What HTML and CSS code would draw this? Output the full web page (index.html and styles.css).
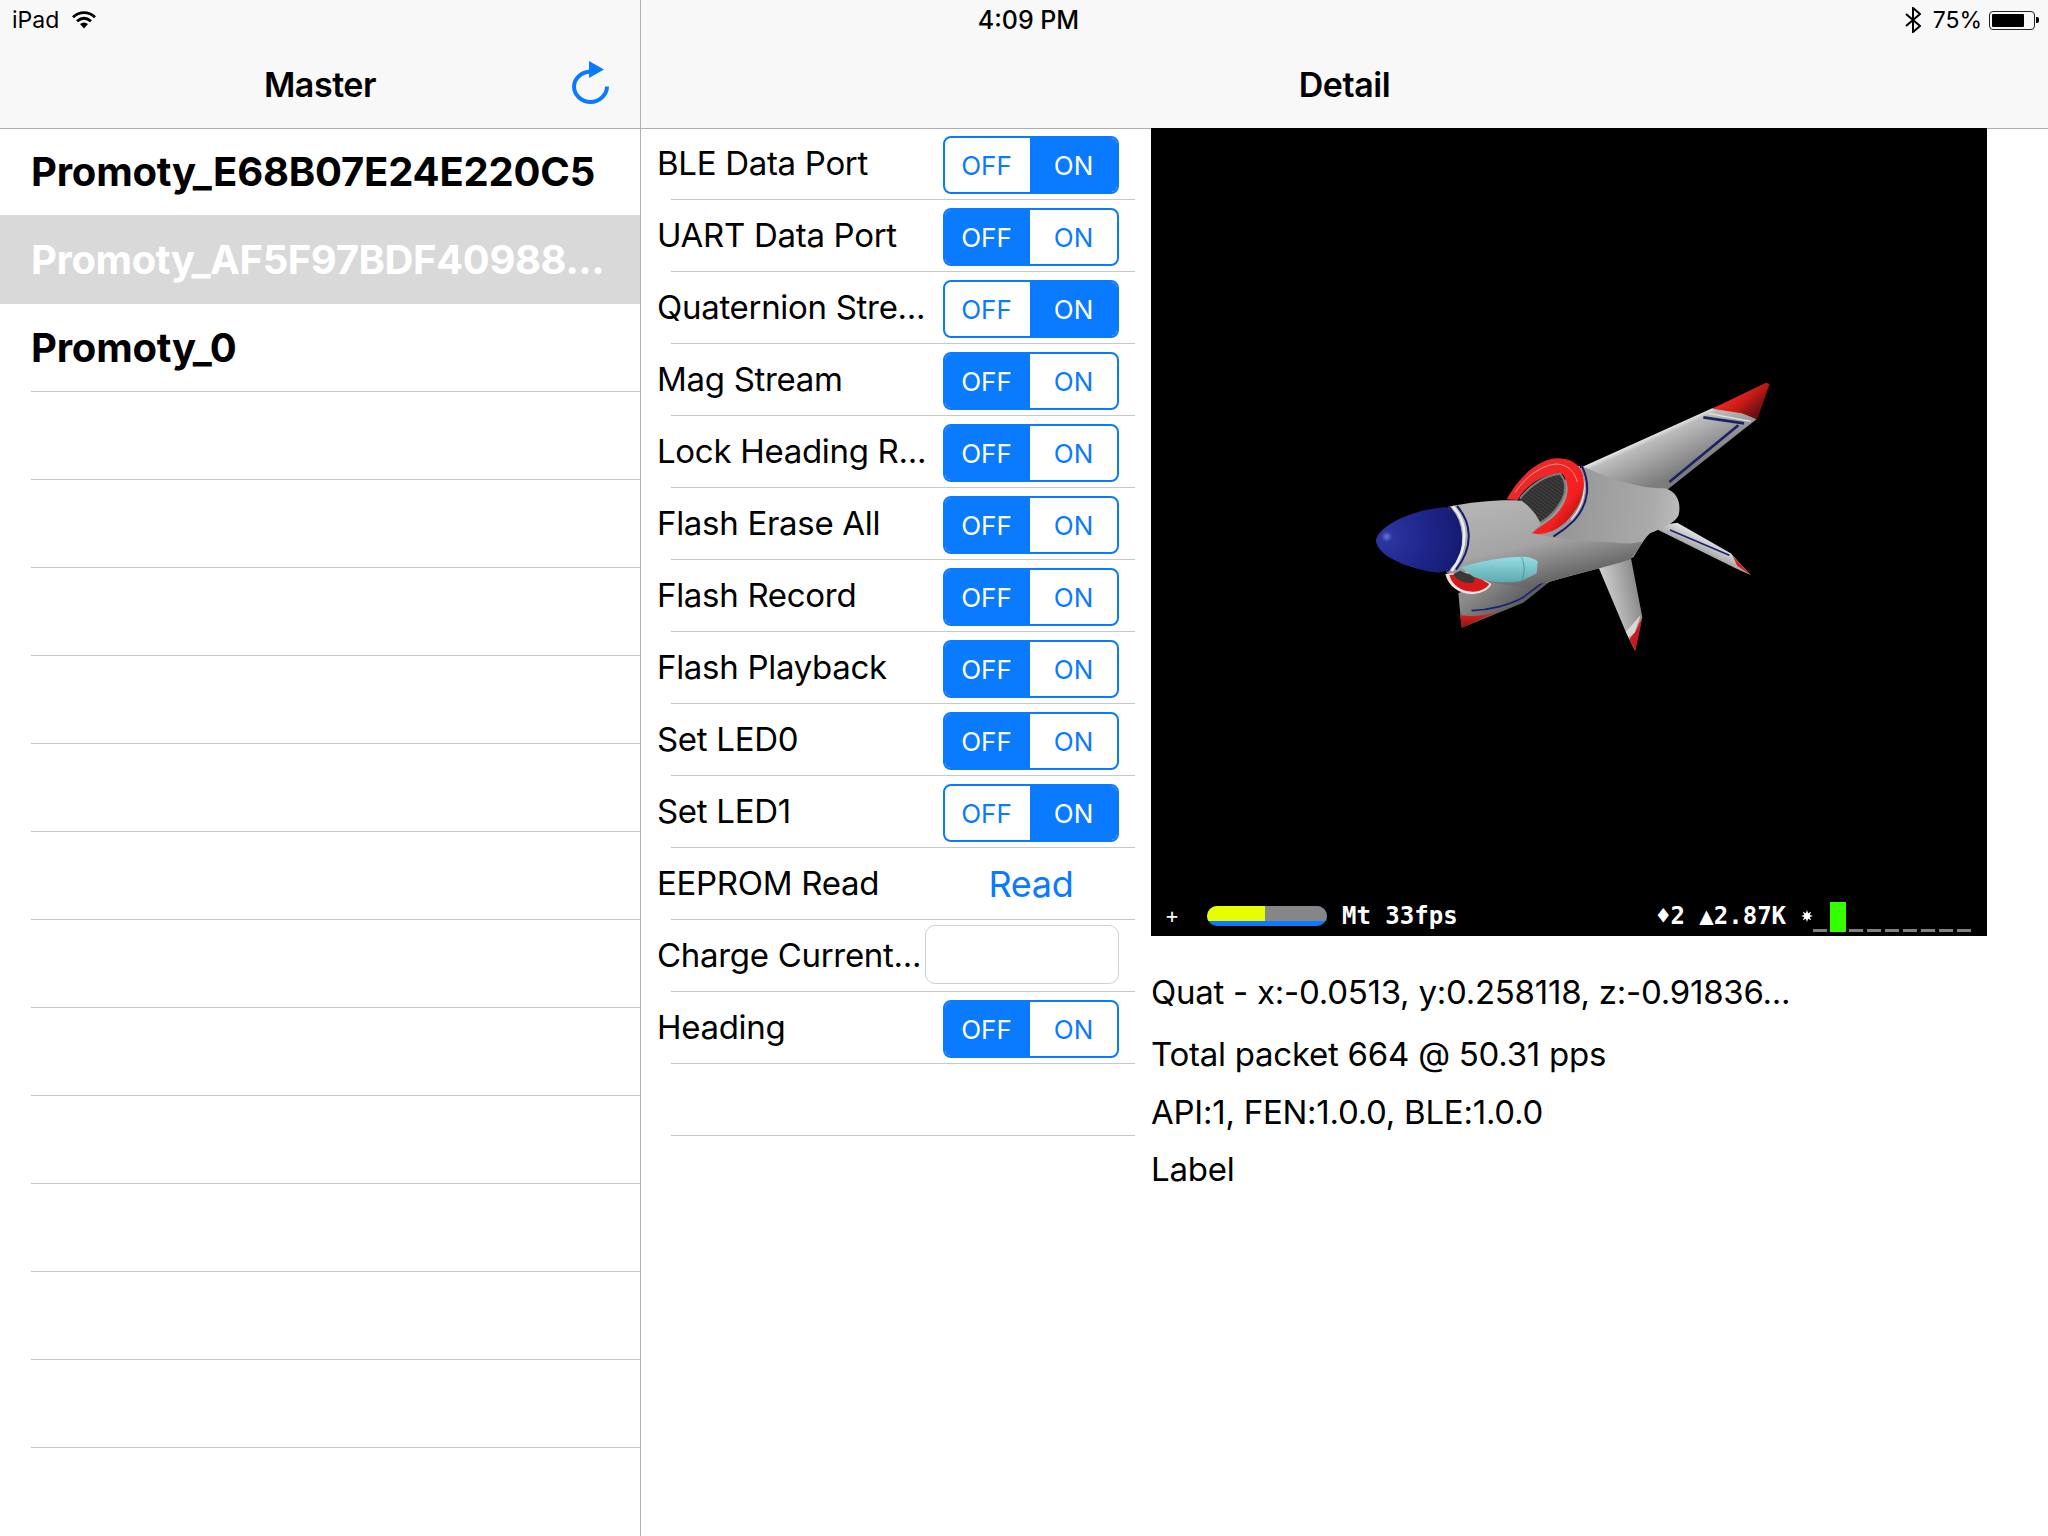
FILE: index.html
```html
<!DOCTYPE html>
<html lang="en">
<head>
<meta charset="utf-8">
<title>Master / Detail</title>
<link rel="stylesheet" href="styles.css">
</head>
<body>
<div class="app">
  <div class="status">
    <div class="status-left">
      <span>iPad</span>
      <svg class="wifi" viewBox="0 0 26 19" aria-hidden="true">
        <path d="M2 7.2C8.6 1.2 17.4 1.2 24 7.2" />
        <path d="M6 11.2C10.4 7.4 15.6 7.4 20 11.2" />
        <path class="wifi-dot" d="M9 14C11.6 12 14.4 12 17 14L13 18.6Z" />
      </svg>
    </div>
    <div class="status-time">4:09 PM</div>
    <div class="status-right">
      <svg class="bt" viewBox="0 0 16 26" aria-hidden="true">
        <path d="M1 7L15 19L8 25V1L15 7L1 19" />
      </svg>
      <span>75%</span>
      <div class="battery"><div class="battery-fill"></div></div>
      <div class="battery-nub"></div>
    </div>
  </div>

  <aside class="master">
    <header class="nav">
      <h1 class="nav-title">Master</h1>
      <svg class="refresh" viewBox="0 0 40 44" aria-hidden="true">
        <path class="refresh-arc" d="M19 11.5C10.5 12 3 18.5 3 26.5C3 35 10.8 42 19.5 42C28 42 36 35 36 26.5" />
        <path class="refresh-head" d="M18 1L33 9.5L18 18Z" />
      </svg>
    </header>
    <ul class="devices">
      <li class="device device-first">Promoty_E68B07E24E220C5</li>
      <li class="device device-selected">Promoty_AF5F97BDF40988...</li>
      <li class="device">Promoty_0</li>
      <li class="device"></li><li class="device"></li><li class="device"></li>
      <li class="device"></li><li class="device"></li><li class="device"></li>
      <li class="device"></li><li class="device"></li><li class="device"></li>
      <li class="device"></li><li class="device"></li><li class="device"></li>
    </ul>
  </aside>

  <main class="detail">
    <header class="nav">
      <h1 class="nav-title">Detail</h1>
    </header>
    <div class="detail-body">
      <section class="controls">
        <div class="row"><span class="row-label">BLE Data Port</span><div class="seg seg-on"><span>OFF</span><span>ON</span></div></div>
        <div class="row"><span class="row-label">UART Data Port</span><div class="seg seg-off"><span>OFF</span><span>ON</span></div></div>
        <div class="row"><span class="row-label">Quaternion Stre...</span><div class="seg seg-on"><span>OFF</span><span>ON</span></div></div>
        <div class="row"><span class="row-label">Mag Stream</span><div class="seg seg-off"><span>OFF</span><span>ON</span></div></div>
        <div class="row"><span class="row-label">Lock Heading R...</span><div class="seg seg-off"><span>OFF</span><span>ON</span></div></div>
        <div class="row"><span class="row-label">Flash Erase All</span><div class="seg seg-off"><span>OFF</span><span>ON</span></div></div>
        <div class="row"><span class="row-label">Flash Record</span><div class="seg seg-off"><span>OFF</span><span>ON</span></div></div>
        <div class="row"><span class="row-label">Flash Playback</span><div class="seg seg-off"><span>OFF</span><span>ON</span></div></div>
        <div class="row"><span class="row-label">Set LED0</span><div class="seg seg-off"><span>OFF</span><span>ON</span></div></div>
        <div class="row"><span class="row-label">Set LED1</span><div class="seg seg-on"><span>OFF</span><span>ON</span></div></div>
        <div class="row"><span class="row-label">EEPROM Read</span><button class="read-btn" type="button">Read</button></div>
        <div class="row"><span class="row-label">Charge Current...</span><input class="field" type="text" aria-label="Charge Current"></div>
        <div class="row"><span class="row-label">Heading</span><div class="seg seg-off"><span>OFF</span><span>ON</span></div></div>
        <div class="row"></div>
      </section>

      <section class="view-column">
        <div class="viewport">
          <svg class="plane" viewBox="0 0 1380 960" aria-hidden="true">
            <defs>
              <linearGradient id="bodyFront" gradientUnits="userSpaceOnUse" x1="500" y1="420" x2="560" y2="680">
                <stop offset="0" stop-color="#b4b4b4"/><stop offset="0.55" stop-color="#a4a4a4"/><stop offset="1" stop-color="#666"/>
              </linearGradient>
              <linearGradient id="bodyRear" gradientUnits="userSpaceOnUse" x1="700" y1="400" x2="1020" y2="440">
                <stop offset="0" stop-color="#989898"/><stop offset="0.75" stop-color="#aaa"/><stop offset="1" stop-color="#bcbcbc"/>
              </linearGradient>
              <linearGradient id="wing" gradientUnits="userSpaceOnUse" x1="905" y1="235" x2="965" y2="365">
                <stop offset="0" stop-color="#f4f4f4"/><stop offset="0.14" stop-color="#bcbcbc"/><stop offset="1" stop-color="#7c7c7c"/>
              </linearGradient>
              <linearGradient id="finLeft" gradientUnits="userSpaceOnUse" x1="420" y1="680" x2="500" y2="780">
                <stop offset="0" stop-color="#8c8c8c"/><stop offset="1" stop-color="#585858"/>
              </linearGradient>
              <linearGradient id="finRight" gradientUnits="userSpaceOnUse" x1="790" y1="700" x2="890" y2="680">
                <stop offset="0" stop-color="#d0d0d0"/><stop offset="0.55" stop-color="#ababab"/><stop offset="1" stop-color="#8c8c8c"/>
              </linearGradient>
              <linearGradient id="finSide" gradientUnits="userSpaceOnUse" x1="1060" y1="520" x2="1030" y2="580">
                <stop offset="0" stop-color="#dcdcdc"/><stop offset="1" stop-color="#7e7e7e"/>
              </linearGradient>
              <radialGradient id="nose" gradientUnits="userSpaceOnUse" cx="140" cy="530" r="240">
                <stop offset="0" stop-color="#6a74d8"/><stop offset="0.07" stop-color="#2c349e"/><stop offset="0.55" stop-color="#1d2488"/><stop offset="1" stop-color="#151a70"/>
              </radialGradient>
              <linearGradient id="canopy" x1="0" y1="0" x2="0" y2="1">
                <stop offset="0" stop-color="#94dde2"/><stop offset="1" stop-color="#5fa9b2"/>
              </linearGradient>
              <linearGradient id="redTip" gradientUnits="userSpaceOnUse" x1="1170" y1="90" x2="1240" y2="170">
                <stop offset="0" stop-color="#ff2a22"/><stop offset="0.5" stop-color="#c81a16"/><stop offset="1" stop-color="#6a1010"/>
              </linearGradient>
              <linearGradient id="redLow" gradientUnits="userSpaceOnUse" x1="400" y1="760" x2="400" y2="805">
                <stop offset="0" stop-color="#e02020"/><stop offset="1" stop-color="#8a1212"/>
              </linearGradient>
              <linearGradient id="ringRed" gradientUnits="userSpaceOnUse" x1="560" y1="340" x2="720" y2="460">
                <stop offset="0" stop-color="#e82a2a"/><stop offset="0.75" stop-color="#f52020"/><stop offset="1" stop-color="#b81212"/>
              </linearGradient>
              <pattern id="grooves" width="9" height="9" patternUnits="userSpaceOnUse" patternTransform="rotate(-55)">
                <rect width="9" height="9" fill="#303030"/>
                <rect width="2" height="9" fill="#4a4a4a"/>
              </pattern>
            </defs>

            <path fill="url(#wing)" d="M728 320L1120 143L1205 155L1250 178L1215 205L978 392L800 385Z"/>
            <path fill="url(#redTip)" d="M1116 146L1278 68L1289 72L1252 178L1205 160Z"/>
            <path class="light-line" d="M1105 160L1232 184"/>
            <path class="navy-line" d="M1090 172L1212 190"/>
            <path class="navy-line" d="M1195 196L988 366"/>

            <path fill="url(#finSide)" d="M935 500L1012 488L1172 580L1232 645L1185 624Z"/>
            <path class="navy-thin" d="M990 510L1168 586"/>
            <path fill="#d82020" d="M1178 588L1232 645L1192 618Z"/>

            <path fill="url(#finRight)" d="M775 620L872 590L907 772L885 872L860 822Z"/>
            <path fill="#c81a1a" d="M907 772L886 872L868 838L886 815Z"/>
            <path fill="#d8d8d8" d="M902 765L884 818L866 832L858 815Z"/>

            <path fill="url(#finLeft)" d="M355 700L450 650L660 630L625 668L550 728L365 803Z"/>
            <path fill="url(#redLow)" d="M360 765C395 772 435 768 478 752L366 803Z"/>
            <path class="navy-thin" d="M395 752C450 750 510 735 550 712L612 665"/>

            <path fill="url(#bodyRear)" d="M728 320C790 345 880 385 975 385C1012 395 1024 430 1016 465C1005 490 965 505 930 520C905 545 898 565 880 592C800 622 700 645 620 668L540 560L620 400Z"/>

            <path class="navy-ring" d="M724 315C752 370 748 430 702 482C682 502 660 518 640 530"/>
            <path class="white-thin" d="M716 318C742 370 738 430 694 478"/>
            <path fill="url(#ringRed)" d="M500 418C530 360 590 298 650 295C692 295 720 312 729 345C740 395 718 445 678 485C650 512 610 527 575 520C600 497 636 482 658 452C688 412 690 372 668 342C620 338 560 370 533 420Z"/>
            <path class="ring-light" d="M525 398C560 345 610 314 650 312C685 314 705 337 712 367"/>
            <path fill="url(#grooves)" d="M537 418C565 375 615 345 660 340C676 355 682 390 666 420C640 465 610 487 590 492C580 465 560 435 537 418Z"/>
            <path class="grey-rim" d="M540 416C568 376 615 346 660 341C676 356 682 390 666 420C650 450 625 475 598 490"/>

            <path fill="url(#bodyFront)" d="M325 440C400 425 480 418 545 422C570 440 595 470 602 492L575 520C650 535 730 548 790 545C830 548 865 555 905 545C900 562 885 580 872 598C790 625 710 640 640 662L550 682L400 660L320 640Z"/>

            <path fill="#f2e4e4" d="M316 642C325 680 360 704 400 702C425 700 446 690 454 672L395 636Z"/>
            <path fill="#d81818" d="M328 645C335 675 365 696 400 695C422 694 440 685 448 672L395 640Z"/>
            <path fill="#383838" d="M340 642C350 662 375 672 400 668L405 650L360 632Z"/>

            <path fill="url(#canopy)" d="M362 622C420 603 490 590 555 590C575 592 590 600 593 605L590 640L545 663C500 670 440 668 400 650Z"/>
            <path class="canopy-line" d="M545 592C555 615 555 640 545 662"/>

            <path fill="url(#nose)" d="M108 540C112 505 200 450 320 441C358 465 378 530 358 590C345 615 325 635 295 638C215 630 108 590 108 540Z"/>
            <path class="navy-ring" d="M325 439C365 480 385 550 322 636"/>
            <path class="white-ring" d="M338 439C378 480 392 555 335 633"/>
            <path class="navy-ring" d="M351 438C392 485 405 555 348 629"/>
          </svg>
          <div class="hud">
            <span class="hud-plus">+</span>
            <div class="pill"><div class="pill-yellow"></div><div class="pill-grey"></div></div>
            <span class="hud-fps">Mt 33fps</span>
            <span class="hud-stats">♦2 ▲2.87K</span>
            <svg class="hud-burst" viewBox="0 0 14 14" aria-hidden="true">
              <path d="M7 0L8.3 3.8L11.9 2.1L10.2 5.7L14 7L10.2 8.3L11.9 11.9L8.3 10.2L7 14L5.7 10.2L2.1 11.9L3.8 8.3L0 7L3.8 5.7L2.1 2.1L5.7 3.8Z"/>
            </svg>
            <div class="meter">
              <i></i><i class="meter-live"></i><i></i><i></i><i></i><i></i><i></i><i></i><i></i>
            </div>
          </div>
        </div>
        <div class="readouts">
          <p class="readout">Quat - x:-0.0513, y:0.258118, z:-0.91836...</p>
          <p class="readout">Total packet 664 @ 50.31 pps</p>
          <p class="readout">API:1, FEN:1.0.0, BLE:1.0.0</p>
          <p class="readout">Label</p>
        </div>
      </section>
    </div>
  </main>
</div>
</body>
</html>
```

FILE: styles.css
```css
* { box-sizing: border-box; }

html, body {
  margin: 0;
  padding: 0;
  height: 100%;
  background: #fff;
}

body {
  font-family: Inter, "Noto Sans", "Liberation Sans", sans-serif;
  color: #000;
  overflow: hidden;
}

.app {
  position: relative;
  display: flex;
  width: 2048px;
  height: 1536px;
}

/* status bar lies over both nav bars */
.status {
  position: absolute;
  top: 0;
  left: 0;
  right: 0;
  height: 40px;
  z-index: 3;
  display: flex;
  align-items: center;
  padding: 0 9px 0 12px;
  font-size: 23px;
}

.status-left,
.status-right {
  flex: 1;
  display: flex;
  align-items: center;
}

.status-right {
  justify-content: flex-end;
}

.status-time {
  margin-left: 6px;
  font-size: 25px;
  font-weight: 500;
}

.wifi {
  width: 26px;
  height: 19px;
  margin-left: 12px;
  margin-top: -2px;
  fill: none;
  stroke: #000;
  stroke-width: 2.8;
}

.wifi-dot {
  fill: #000;
  stroke: none;
}

.bt {
  width: 16px;
  height: 26px;
  margin-right: 12px;
  fill: none;
  stroke: #000;
  stroke-width: 2;
}

.battery {
  width: 46px;
  height: 19px;
  margin-left: 7px;
  border: 1px solid #222;
  border-radius: 4px;
  padding: 2px;
}

.battery-fill {
  width: 32px;
  height: 100%;
  background: #000;
  border-radius: 1px;
}

.battery-nub {
  width: 3px;
  height: 6px;
  margin-left: 1px;
  background: #000;
  border-radius: 0 2px 2px 0;
}

/* split view */
.master {
  flex: 0 0 641px;
  border-right: 1px solid #b0b0b0;
  display: flex;
  flex-direction: column;
}

.detail {
  flex: 1;
  display: flex;
  flex-direction: column;
  min-width: 0;
}

.nav {
  position: relative;
  z-index: 1;
  flex: 0 0 128px;
  height: 128px;
  padding-top: 40px;
  display: flex;
  align-items: center;
  justify-content: center;
  background: #f8f8f8;
  box-shadow: 0 1px 0 #b0b0b0;
}

.nav-title {
  margin: 0;
  font-size: 34px;
  font-weight: 600;
  letter-spacing: -0.45px;
}

.refresh {
  position: absolute;
  left: 571px;
  top: 60px;
  width: 40px;
  height: 44px;
}

.refresh-arc {
  fill: none;
  stroke: #0a7aff;
  stroke-width: 4;
}

.refresh-head {
  fill: #0a7aff;
}

/* device list */
.devices {
  list-style: none;
  margin: 0;
  padding: 0;
}

.device {
  height: 88px;
  margin-left: 31px;
  display: flex;
  align-items: center;
  font-size: 40px;
  font-weight: 700;
  letter-spacing: -0.2px;
  border-bottom: 1px solid #c8c7cc;
  white-space: nowrap;
}

.device-first {
  height: 87px;
  border-bottom: 0;
}

.device-selected {
  height: 89px;
  margin-left: 0;
  padding-left: 31px;
  background: #d9d9d9;
  color: #fff;
  letter-spacing: -0.4px;
  border-bottom: 0;
}

/* control table */
.detail-body {
  flex: 1;
  display: flex;
  min-height: 0;
}

.controls {
  flex: 0 0 494px;
}

.row {
  height: 72px;
  margin-left: 30px;
  padding-right: 16px;
  display: flex;
  align-items: center;
  justify-content: space-between;
  border-bottom: 1px solid #c8c7cc;
}

.row-label {
  margin: 0 0 2px -14px;
  font-size: 33px;
  letter-spacing: -0.3px;
  white-space: nowrap;
}

.seg {
  flex: 0 0 176px;
  height: 58px;
  margin-top: 3px;
  display: flex;
  border: 2px solid #0a7aff;
  border-radius: 8px;
  overflow: hidden;
  font-size: 26px;
  color: #0a7aff;
}

.seg span {
  flex: 1;
  display: flex;
  align-items: center;
  justify-content: center;
}

.seg span:first-child {
  flex: 0 0 85px;
  padding-right: 2px;
}

.seg-on span:last-child,
.seg-off span:first-child {
  background: #0a7aff;
  color: #fff;
}

.read-btn {
  flex: 0 0 176px;
  height: 58px;
  margin-top: 0;
  padding: 0;
  border: 0;
  background: none;
  font-family: inherit;
  font-size: 36px;
  letter-spacing: -0.3px;
  color: #0a7aff;
}

.field {
  flex: 0 0 194px;
  height: 59px;
  margin-bottom: 3px;
  padding: 0;
  border: 1px solid #cfcfcf;
  border-radius: 10px;
  background: #fff;
}

/* GL view */
.view-column {
  flex: 1;
  min-width: 0;
  margin-left: 16px;
}

.viewport {
  position: relative;
  z-index: 2;
  width: 836px;
  height: 808px;
  background: #000;
  display: flex;
  flex-direction: column;
  justify-content: flex-end;
}

.plane {
  position: absolute;
  left: 189px;
  top: 232px;
  width: 460px;
  height: 320px;
}

.hud {
  position: relative;
  height: 36px;
  margin-bottom: 2px;
  display: flex;
  align-items: center;
  color: #fff;
  font-family: "DejaVu Sans Mono", "Liberation Mono", monospace;
  font-size: 24px;
  font-weight: 700;
  line-height: 30px;
  white-space: pre;
}

.hud-plus {
  width: 14px;
  margin-left: 14px;
  font-size: 20px;
  font-weight: 400;
  text-align: center;
}

.pill {
  width: 120px;
  height: 20px;
  margin-left: 28px;
  border-radius: 10px;
  overflow: hidden;
  display: flex;
  background: #0a7aff;
  align-items: flex-start;
}

.pill-yellow {
  width: 58px;
  height: 15px;
  background: #e6ff00;
}

.pill-grey {
  flex: 1;
  height: 15px;
  background: #868686;
}

.hud-fps {
  width: 314px;
  margin-left: 15px;
}

.hud-stats {
  width: 145px;
}

.hud-burst {
  width: 12px;
  height: 12px;
  fill: #fff;
}

.meter {
  align-self: flex-end;
  display: flex;
  align-items: flex-end;
  gap: 4px;
  height: 30px;
  margin-bottom: 2px;
}

.meter i {
  display: block;
  width: 14px;
  height: 3px;
  background: #808080;
}

.meter .meter-live {
  width: 16px;
  height: 30px;
  margin: 0 -1px;
  background: #33ff00;
}

.readouts {
  display: grid;
  grid-template-rows: 60px 63px 54px 59px;
  padding-top: 26px;
  align-items: center;
}

.readout {
  margin: 0;
  font-size: 33px;
  letter-spacing: -0.25px;
  white-space: nowrap;
}

/* aircraft strokes */
.navy-line { fill: none; stroke: #1b2266; stroke-width: 8; }
.light-line { fill: none; stroke: #e4e4e4; stroke-width: 4; }
.navy-thin { fill: none; stroke: #1b2270; stroke-width: 5; }
.navy-ring { fill: none; stroke: #161c70; stroke-width: 6; }
.white-ring { fill: none; stroke: #ececec; stroke-width: 8; }
.ring-light { fill: none; stroke: #ff8a8a; stroke-width: 3; }
.white-thin { fill: none; stroke: #f2e8e8; stroke-width: 4; }
.grey-rim { fill: none; stroke: #7c7c7c; stroke-width: 6; }
.canopy-line { fill: none; stroke: #3f7f88; stroke-width: 2; }
```
